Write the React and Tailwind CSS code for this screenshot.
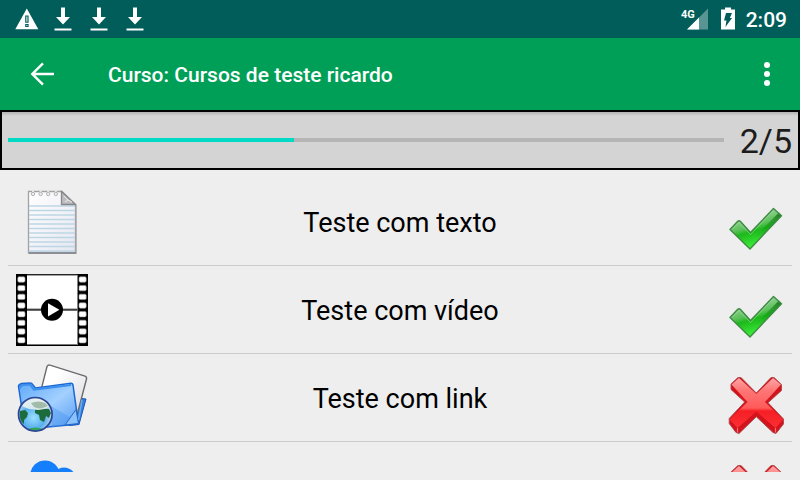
const lessons = [
    { id: 1, label: "Teste com texto", icon: NoteIcon, done: true },
    { id: 2, label: "Teste com vídeo", icon: VideoIcon, done: true },
    { id: 3, label: "Teste com link", icon: LinkIcon, done: false },
    { id: 4, label: "", icon: CloudIcon, done: false },
];

function WarningIcon() {
    return (
        <svg viewBox="0 0 24 24" className="size-6" fill="#fff">
            <path d="M11.8 1.5 0.3 22.3h23Z" />
            <path d="M10.2 8.6h3.4v7.2h-3.4ZM10.200 17h3.400v3h-3.400Z" fill="#005d5a" />
            <path d="M11.400 9.600h1v5.200h-1zM11.400 18h1v1h-1z" />
        </svg>
    );
}

function DownloadIcon() {
    return (
        <svg viewBox="0 0 24 24" className="size-6" fill="#fff">
            <path d="M10 0.5h4v9.500h5l-7 7.500-7-7.500H10ZM3.500 21.500h17v2H3.500Z" />
        </svg>
    );
}

function SignalIcon() {
    return (
        <svg viewBox="0 0 28 24" className="w-7 h-6" fill="#fff">
            <path d="M27 1.500v21H6Z" opacity="0.35" />
            <path d="M18 10.500v12H6Z" />
            <path d="M0 0h14v11H0Z" fill="#005d5a" />
            <text x="0" y="11" fontSize="11" fontWeight="700" fontFamily="Roboto, sans-serif">4G</text>
        </svg>
    );
}

function BatteryIcon() {
    return (
        <svg viewBox="0 0 14 24" className="w-[14px] h-6">
            <path d="M4 0.5h6v2h4v20H0v-20h4Z" fill="#fff" />
            <path d="M5 6h6L8.8 11H11L4.5 20l.9-6.500H3Z" fill="#005d5a" />
        </svg>
    );
}

function NoteIcon() {
    const lines = [0, 1, 2, 3, 4, 5, 6, 7, 8, 9, 10];
    return (
        <svg viewBox="0 0 72 72" className="size-[72px]">
            <defs>
                <linearGradient id="paper" x1="0" y1="0" x2="1" y2="1">
                    <stop offset="0" stopColor="#fff" />
                    <stop offset="1" stopColor="#e6e6f2" />
                </linearGradient>
            </defs>
            <path d="M13 7h34l14 13v48H13Z" fill="#000" opacity="0.2" />
            <path d="M12.500 5.500H46L59.500 18.500V66.500H12.500Z" fill="url(#paper)" stroke="#a2a2a6" strokeWidth="1.3" />
            {lines.map(i => (
                <path key={i} d={`M13 ${20 + i * 4.5}H59`} stroke="#bcd7e4" strokeWidth="1.4" />
            ))}
            <path d="M12.500 67H60" stroke="#8d8d95" strokeWidth="1.8" />
            {[17, 24.6, 32.2, 39.8].map(x => (
                <g key={x}>
                    <path d={`M${x - 1} 4.500h2v3h-2Z`} fill="#eee" />
                    <circle cx={x} cy="8" r="1.7" fill="#ededed" stroke="#b4b4b4" />
                </g>
            ))}
            <path d="M45.500 5.500 59.500 18.500H45.500Z" fill="#bdbdc0" stroke="#88888c" strokeWidth="1.3" />
            <path d="M48 10l4 4-3 2M52 14l4 2" stroke="#e9e9e9" fill="none" />
        </svg>
    );
}

function VideoIcon() {
    const holes = [0, 1, 2, 3, 4, 5, 6, 7];
    return (
        <svg viewBox="0 0 72 72" className="size-[72px]">
            <path d="M0 0h72v72H0Z" />
            <path d="M11 1h50.500v70H11Z" fill="#fff" />
            <path d="M11 1.200h50.500M11 70.500h50.500" stroke="#777" />
            <path d="M11 35.700h50.500" stroke="#777" strokeWidth="2.600" />
            <path d="M11 35.700h50.500" stroke="#222" strokeWidth="0.8" />
            {holes.map(i => (
                <g key={i} fill="#fff" stroke="#999" strokeWidth="0.6">
                    <rect x="1.8" y={2.8 + i * 8.67} width="7.2" height="5.4" rx="1.4" />
                    <rect x="63" y={2.8 + i * 8.67} width="7.2" height="5.4" rx="1.4" />
                </g>
            ))}
            <circle cx="36" cy="35.7" r="11" />
            <path d="M32 29.200v13.200l11.400-6.600Z" fill="#fff" />
        </svg>
    );
}

function LinkIcon() {
    return (
        <svg viewBox="0 0 72 72" className="size-[72px]">
            <defs>
                <linearGradient id="folder" x1="0" y1="0" x2="1" y2="1">
                    <stop offset="0" stopColor="#5fa9f8" />
                    <stop offset="0.5" stopColor="#a3d0ff" />
                    <stop offset="1" stopColor="#4f98f2" />
                </linearGradient>
                <linearGradient id="sheet" x1="0" y1="0" x2="1" y2="1">
                    <stop offset="0.3" stopColor="#fff" />
                    <stop offset="1" stopColor="#d5d3da" />
                </linearGradient>
                <radialGradient id="globe" cx="0.45" cy="0.6" r="0.55">
                    <stop offset="0" stopColor="#9be0ff" />
                    <stop offset="0.6" stopColor="#58aeee" />
                    <stop offset="1" stopColor="#c4dbe8" />
                </radialGradient>
            </defs>
            <path d="M65 36.500l5 .5-7 25.500-10 1Z" fill="#2f80df" stroke="#1c56b5" />
            <path d="M31 4.500Q32 2.500 34 3.200L69 14.200Q71 15 70.500 17L60 57 22 40Z" fill="url(#sheet)" stroke="#6c6c70" strokeWidth="1.4" />
            <path d="M2.500 24.500Q2.500 22.500 5.500 21.500L14 21q2 0 3 2l2.500 3L55 21.200q1.800 0 2 2L62.500 62 16 66.500 8 60Z" fill="url(#folder)" stroke="#1e68d2" strokeWidth="1.5" />
            <path d="M4 26.500q0-3 3-3.500l7-.4 4 5L55 23" fill="none" stroke="#3b8fee" strokeWidth="2" />
            <path d="M35 44l27 16-1 1.500L36 65Z" fill="#4996ed" opacity="0.4" />
            <path d="M49 63 60 47.500 62.500 61.500Z" fill="#8cc2fb" stroke="#2466c8" />
            <path d="M66 38 62.500 58" stroke="#67aaf4" strokeWidth="1.5" />
            <circle cx="19.3" cy="52.3" r="16.800" fill="url(#globe)" />
            <path d="M4 49l5-1 3 3-1 4-3 3 0 4C5 60 3 55 4 49ZM19 48l4-2 6 1 4 0 2 4-2 5-3-2-2 6-4-2-1-5-4-2Z" fill="#1c6b3d" />
            <path d="M12 67q7-3 15 0-7 4-15 0Z" fill="#2fa35c" />
            <path d="M6 44Q10 36 20 36.500q9 0 13 8-7 5-14 3-7 0-13-3.500Z" fill="#eef5ee" opacity="0.85" />
            <path d="M15 41q8-3 14 0l3 3q-8 4-14 1Z" fill="#91af9a" opacity="0.8" />
            <circle cx="19.3" cy="52.3" r="16.800" fill="none" stroke="#2c4593" strokeWidth="1.7" />
        </svg>
    );
}

function CloudIcon() {
    return (
        <svg viewBox="0 0 72 72" className="size-[72px]" fill="#157efb">
            <circle cx="29" cy="25.2" r="14.8" />
            <circle cx="48" cy="29.600" r="12" />
            <rect x="8" y="26" width="56" height="26" rx="13" />
        </svg>
    );
}

function CheckIcon() {
    return (
        <svg viewBox="0 0 72 72" className="size-[72px]" role="img" aria-label="Concluído">
            <defs>
                <linearGradient id="check" gradientUnits="userSpaceOnUse" x1="36" y1="26" x2="46" y2="60">
                    <stop offset="0" stopColor="#a5d8a3" />
                    <stop offset="0.42" stopColor="#5cc05b" />
                    <stop offset="0.56" stopColor="#1db81b" />
                    <stop offset="1" stopColor="#3df03c" />
                </linearGradient>
                <linearGradient id="checkShade" x1="1" y1="0" x2="0" y2="1">
                    <stop offset="0" stopColor="#066a0a" stopOpacity="0.8" />
                    <stop offset="1" stopColor="#12a012" stopOpacity="0" />
                </linearGradient>
            </defs>
            <path d="M18 43.500 25.500 35.500Q27 34 28.500 35.500L38.500 46.500 61.500 22.500 69.500 29.800 38 63Z" fill="url(#check)" />
            <path d="M67 26.500 69.500 29.800 48 52 43 50Z" fill="url(#checkShade)" />
            <path d="M18 43.500 25.500 35.500Q27 34 28.500 35.500L38.500 46.500 61.500 22.500 69.500 29.800 38 63Z" fill="none" stroke="#3f8a44" strokeWidth="1.4" strokeLinejoin="round" />
            <path d="M20 43.500 27 36.500 38.500 48.500 61.500 24.500" fill="none" stroke="#b4e4b3" strokeWidth="0.8" opacity="0.6" />
        </svg>
    );
}

function CrossIcon() {
    return (
        <svg viewBox="0 0 72 72" className="size-[72px]" role="img" aria-label="Pendente">
            <defs>
                <linearGradient id="cross" x1="0" y1="0" x2="0" y2="1">
                    <stop offset="0" stopColor="#ffa6a6" />
                    <stop offset="0.25" stopColor="#ff7676" />
                    <stop offset="0.6" stopColor="#ff5a5a" />
                    <stop offset="0.66" stopColor="#f51f24" />
                    <stop offset="1" stopColor="#fb3035" />
                </linearGradient>
            </defs>
            <path d="M19 22 26 15.500h3L44.300 31 59 15.500h3L69.500 22.500V28.500L56 40.700 71.500 57V62L64 71.500 61 70.500 44.300 54.700 27 71.500 24 70.500 17.200 61.500V56.500L32.700 40 19 27.500Z" fill="#d3141c" stroke="#a8474c" strokeWidth="0.9" strokeLinejoin="round" />
            <path d="M19.500 22.500 27 16 44.300 32 61 16 69 22.500 53 40 71 57.500 63.500 66 44.300 49.500 25.500 66 17.500 57.500 35.500 40Z" fill="url(#cross)" />
            <path d="M25.500 66v4.500M63.500 66v4.500" stroke="#ff7272" strokeWidth="1.2" />
        </svg>
    );
}

function StatusBar() {
    return (
        <div className="flex items-center h-[38px] shrink-0 bg-[#005d5a] pl-[15px] pr-[13px] text-white">
            <div className="flex flex-1 gap-3">
                <WarningIcon />
                <DownloadIcon />
                <DownloadIcon />
                <DownloadIcon />
            </div>
            <SignalIcon />
            <div className="ml-3 mr-[11px]">
                <BatteryIcon />
            </div>
            <span className="pt-0.5 text-[21px] leading-6 font-medium">2:09</span>
        </div>
    );
}

function Toolbar({ title }) {
    return (
        <header className="flex items-center h-[72px] shrink-0 bg-[#009f58] pl-6 pr-[15px] text-white">
            <button aria-label="Voltar" className="mr-12">
                <svg viewBox="0 0 24 24" className="size-9" fill="#fff">
                    <path d="M20 11.200H7.500l5.700-5.700L12.100 4.300 4.400 12l7.700 7.700 1.100-1.200-5.700-5.700H20z" />
                </svg>
            </button>
            <h1 className="flex-1 pt-0.5 text-[21px] leading-6 font-medium">{title}</h1>
            <button aria-label="Mais opções">
                <svg viewBox="0 0 24 24" className="size-9" fill="#fff">
                    <circle cx="12" cy="6" r="2" />
                    <circle cx="12" cy="12" r="2" />
                    <circle cx="12" cy="18" r="2" />
                </svg>
            </button>
        </header>
    );
}

function CourseProgress({ value, max }) {
    return (
        <div className="flex items-center gap-4 h-[60px] shrink-0 border-2 border-black px-1.5 bg-linear-to-b from-[#b2b2b2] to-[#d4d4d4] to-[4px]">
            <progress
                aria-label="Progresso do curso"
                value={value}
                max={max}
                className="flex-1 min-w-0 h-1 appearance-none [&::-webkit-progress-bar]:bg-[#b5b5b5] [&::-webkit-progress-value]:bg-[#00dac5]"
            />
            <span className="pt-0.5 text-[34px] leading-10 text-[#1c1c1c]">{value}/{max}</span>
        </div>
    );
}

function LessonRow({ lesson }) {
    const Icon = lesson.icon;
    return (
        <li className="flex items-center px-2 pt-2 pb-[7px] border-b border-[#cdcdcd]">
            <Icon />
            <span className="flex-1 pt-0.5 text-center text-[27px] leading-8">{lesson.label}</span>
            {lesson.done ? <CheckIcon /> : <CrossIcon />}
        </li>
    );
}

export default function App() {
    return (
        <div className="flex flex-col h-screen bg-[#eeeeee] text-black font-[Roboto,sans-serif]">
            <StatusBar />
            <Toolbar title="Curso: Cursos de teste ricardo" />
            <CourseProgress value={2} max={5} />
            <ul className="flex-1 min-h-0 m-2 overflow-hidden">
                {lessons.map(lesson => (
                    <LessonRow key={lesson.id} lesson={lesson} />
                ))}
            </ul>
        </div>
    );
}
